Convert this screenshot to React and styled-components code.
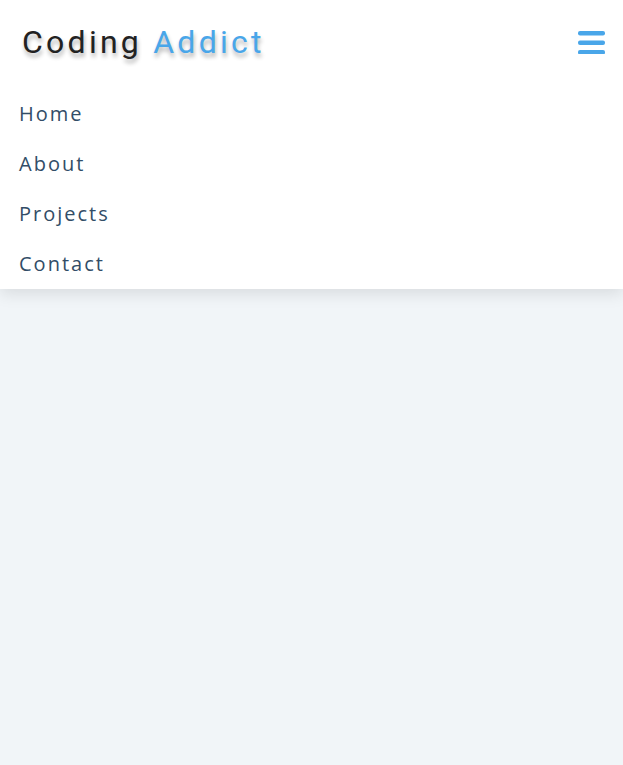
import styled, { createGlobalStyle } from "styled-components"

const GlobalStyle = createGlobalStyle`
  * {
    box-sizing: border-box;
  }
  body {
    margin: 0;
    background: #f1f5f8;
    font-family: "Open Sans", sans-serif;
    min-height: 100vh;
  }
`

const Nav = styled.nav`
  background: #fff;
  box-shadow: 0 5px 15px rgba(0, 0, 0, 0.1);
`

const Header = styled.div`
  display: flex;
  align-items: center;
  justify-content: space-between;
  height: 89px;
  padding: 0 18px 5px 22px;
`

const Logo = styled.h1`
  margin: 0;
  font-family: Roboto, sans-serif;
  font-weight: 400;
  font-size: 32px;
  letter-spacing: 3.25px;
  color: #222;
  text-shadow: 1px 4px 4px rgba(0, 0, 0, 0.3);
`

const Accent = styled.span`
  color: #49a6e9;
`

const Toggle = styled.button`
  display: flex;
  padding: 0;
  border: none;
  background: transparent;
  cursor: pointer;
`

const Links = styled.ul`
  list-style: none;
  margin: 0;
  padding: 0;
`

const Link = styled.a`
  display: block;
  padding: 10px 19px;
  font-size: 20px;
  line-height: 30px;
  letter-spacing: 2px;
  color: #324d67;
  text-decoration: none;
`

const links = ["Home", "About", "Projects", "Contact"]

export default function App() {
  return (
    <>
      <GlobalStyle />
      <Nav>
        <Header>
          <Logo>
            Coding <Accent>Addict</Accent>
          </Logo>
          <Toggle aria-label="menu">
            <svg width="27" height="24" viewBox="0 0 27 24">
              <rect x="0" y="1" width="27" height="4.5" rx="2" fill="#49a6e9" />
              <rect x="0" y="10.5" width="27" height="4.5" rx="2" fill="#49a6e9" />
              <rect x="0" y="20" width="27" height="4.5" rx="2" fill="#49a6e9" />
            </svg>
          </Toggle>
        </Header>
        <Links>
          {links.map(l => (
            <li key={l}>
              <Link href="#">{l}</Link>
            </li>
          ))}
        </Links>
      </Nav>
    </>
  )
}
